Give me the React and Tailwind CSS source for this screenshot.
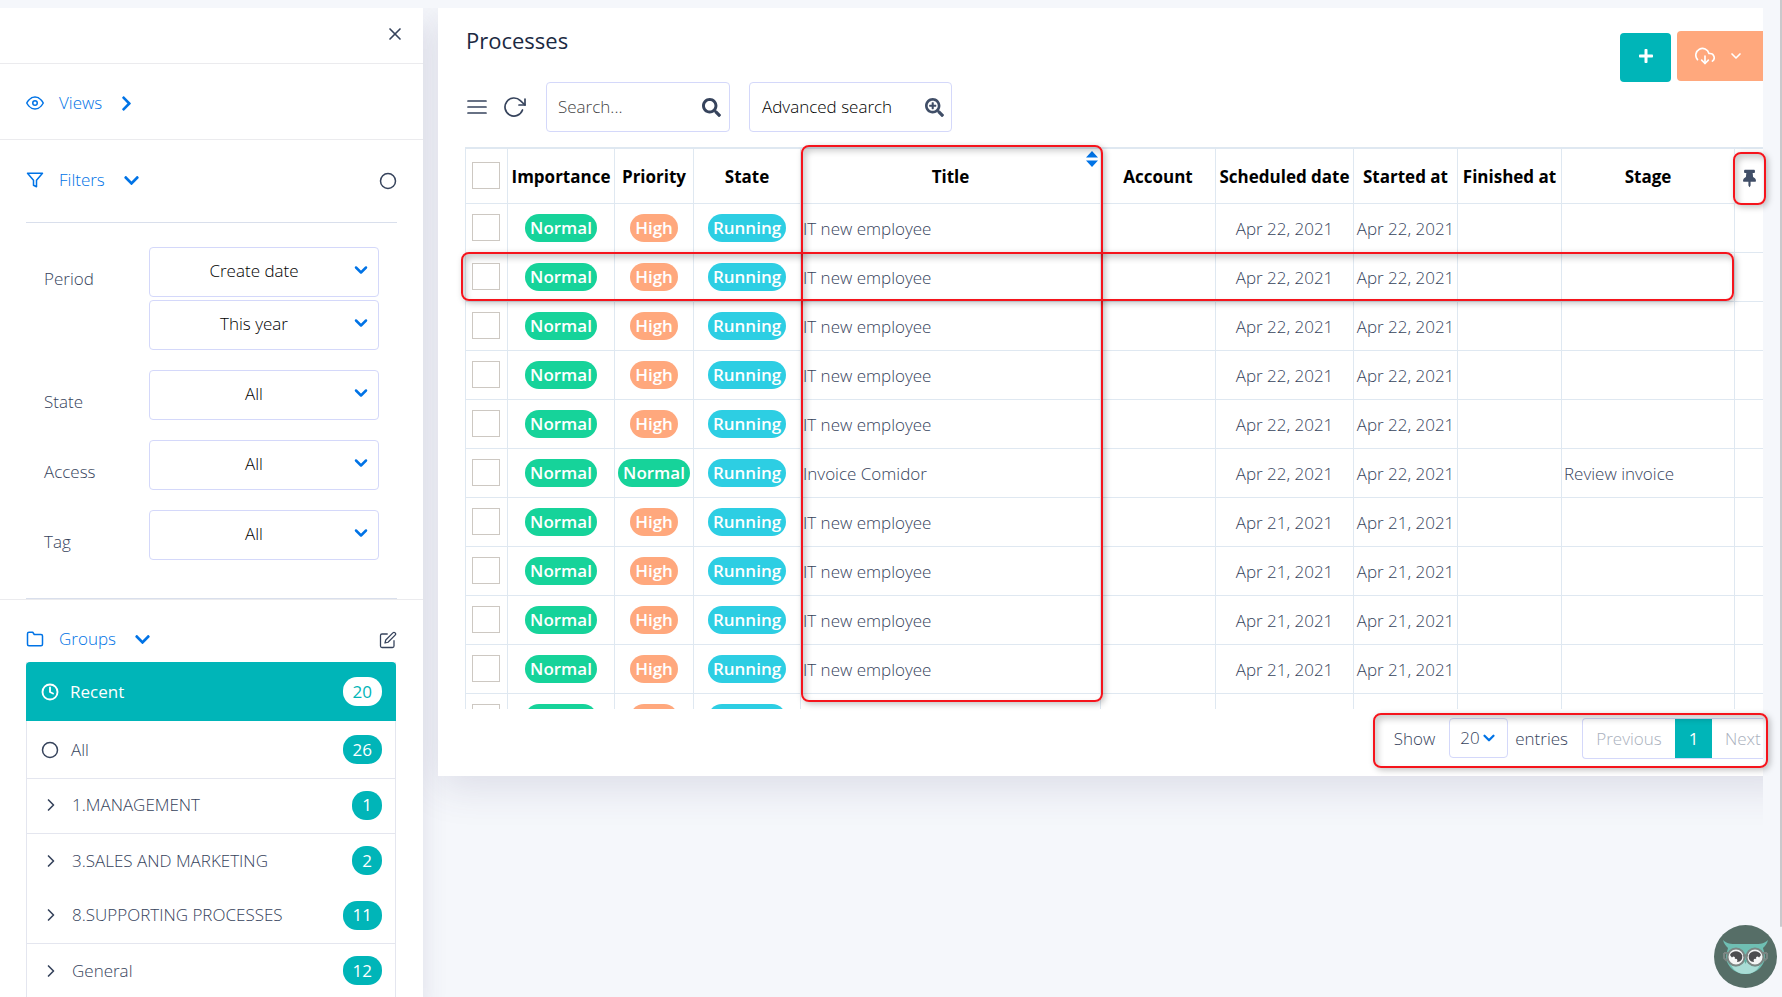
import React, { useState } from 'react';
import {
  FiChevronDown,
  FiChevronRight,
  FiCircle,
  FiClock,
  FiDownloadCloud,
  FiEdit,
  FiEye,
  FiFilter,
  FiFolder,
  FiMenu,
  FiRotateCw,
  FiX
} from 'react-icons/fi';
import { FaChevronDown, FaChevronRight, FaPlus, FaSearch, FaSearchPlus, FaThumbtack } from 'react-icons/fa';

const FILTERS = [
  { label: 'Period', options: ['Create date', 'This year'] },
  { label: 'State', options: ['All'] },
  { label: 'Access', options: ['All'] },
  { label: 'Tag', options: ['All'] }
];

const TREE = [
  { name: '1.MANAGEMENT', count: 1, line: true },
  { name: '3.SALES AND MARKETING', count: 2, line: false },
  { name: '8.SUPPORTING PROCESSES', count: 11, line: true },
  { name: 'General', count: 12, line: false }
];

const ROWS = [
  { title: 'IT new employee', priority: 'High', date: 'Apr 22, 2021' },
  { title: 'IT new employee', priority: 'High', date: 'Apr 22, 2021' },
  { title: 'IT new employee', priority: 'High', date: 'Apr 22, 2021' },
  { title: 'IT new employee', priority: 'High', date: 'Apr 22, 2021' },
  { title: 'IT new employee', priority: 'High', date: 'Apr 22, 2021' },
  { title: 'Invoice Comidor', priority: 'Normal', date: 'Apr 22, 2021', stage: 'Review invoice' },
  { title: 'IT new employee', priority: 'High', date: 'Apr 21, 2021' },
  { title: 'IT new employee', priority: 'High', date: 'Apr 21, 2021' },
  { title: 'IT new employee', priority: 'High', date: 'Apr 21, 2021' },
  { title: 'IT new employee', priority: 'High', date: 'Apr 21, 2021' },
  { title: 'IT new employee', priority: 'High', date: 'Apr 21, 2021' }
];

const PILL_COLORS = {
  Normal: 'bg-[#16d39a]',
  High: 'bg-[#ffa87d]',
  Running: 'bg-[#2dcee3]'
};

function Pill({ text }) {
  return (
    <span className={`inline-flex h-7 items-center rounded-full px-[5px] align-middle font-semibold text-white ${PILL_COLORS[text]}`}>
      {text}
    </span>
  );
}

function Count({ value, active }) {
  return (
    <span className={`flex h-[29px] min-w-[30px] items-center justify-center rounded-[14px] px-[10px] font-normal ${active ? 'bg-white text-[#00b5b8]' : 'bg-[#00b5b8] text-white'}`}>
      {value}
    </span>
  );
}

function Checkbox({ label }) {
  return (
    <input
      type="checkbox"
      aria-label={label}
      className="block h-[27px] w-7 appearance-none border border-[#cdc8c2] bg-white checked:bg-[#00b5b8]"
    />
  );
}

function FilterSelect({ id, value, label }) {
  return (
    <div className="relative">
      <select
        id={id}
        aria-label={label}
        className="block h-[50px] w-full appearance-none rounded border border-[#d4d8fa] bg-white pr-5 pb-[2px] text-center font-light text-black"
      >
        <option>{value}</option>
      </select>
      <FiChevronDown className="pointer-events-none absolute top-[13px] right-2 h-5 w-5 text-[#0073e6]" strokeWidth={3} />
    </div>
  );
}

function SectionHeader({ icon: Icon, title, open, children }) {
  const Arrow = open ? FaChevronDown : FaChevronRight;
  return (
    <div className="flex items-center justify-between">
      <button type="button" className="flex items-center text-[#0073e6]">
        <Icon className="mr-[15px] h-[18px] w-[18px]" />
        <span>{title}</span>
        <Arrow className={open ? 'ml-[18px] h-[17px] w-[17px]' : 'ml-4 h-[17px] w-[17px]'} />
      </button>
      {children}
    </div>
  );
}

function Sidebar() {
  return (
    <aside className="w-[423px] shrink-0 bg-white shadow-[0_16px_24px_rgba(62,57,107,0.12)]">
      <div className="flex h-14 items-center justify-end border-b border-[#ebebee] pr-[18px] pb-1">
        <button type="button" aria-label="Close">
          <FiX className="h-5 w-5" />
        </button>
      </div>
      <div className="h-[76px] border-b border-[#ebebee] px-[26px] pt-[27px]">
        <SectionHeader icon={FiEye} title="Views" />
      </div>
      <div className="h-[460px] border-b border-[#ebebee] px-[26px] pt-7">
        <SectionHeader icon={FiFilter} title="Filters" open>
          <button type="button" aria-label="Clear filters" className="pt-[2px]">
            <FiCircle className="h-[18px] w-[18px]" />
          </button>
        </SectionHeader>
        <div className="mt-[30px] flex h-[377px] flex-col gap-5 border-t border-b border-[#d9dfec] px-[18px] pt-6">
          {FILTERS.map((f) => (
            <div key={f.label} className="flex">
              <label htmlFor={`filter-${f.label}`} className="w-[105px] shrink-0 pt-5">{f.label}</label>
              <div className="flex flex-1 flex-col gap-[3px]">
                {f.options.map((value, i) => (
                  <FilterSelect key={value} id={i === 0 ? `filter-${f.label}` : undefined} value={value} label={i > 0 ? `${f.label} range` : undefined} />
                ))}
              </div>
            </div>
          ))}
        </div>
      </div>
      <div className="px-[26px] pt-[27px]">
        <SectionHeader icon={FiFolder} title="Groups" open>
          <button type="button" aria-label="Edit groups" className="pt-[2px]">
            <FiEdit className="h-[18px] w-[18px]" strokeWidth={1.7} />
          </button>
        </SectionHeader>
        <ul className="mt-[11px] mr-px rounded-b border-x border-b border-[#e4e6ef]">
          <li className="-mx-px flex h-[59px] items-center rounded-t bg-[#00b5b8] pr-[14px] pl-[15px] font-normal text-white">
            <FiClock className="mr-[11px] h-[18px] w-[18px]" strokeWidth={2.5} />
            <a href="#recent" className="flex-1">Recent</a>
            <Count value={20} active />
          </li>
          <li className="flex h-[58px] items-center border-b border-[#e4e6ef] pr-[13px] pl-[14px]">
            <FiCircle className="mr-3 h-[18px] w-[18px]" />
            <a href="#all" className="flex-1">All</a>
            <Count value={26} />
          </li>
          {TREE.map((g) => (
            <li key={g.name} className={`flex h-[55px] items-center pr-[13px] pb-[2px] pl-[14px] ${g.line ? 'border-b border-[#e4e6ef]' : ''}`}>
              <FiChevronRight className="mr-[11px] h-5 w-5" />
              <a href={`#${g.name}`} className="flex-1">{g.name}</a>
              <Count value={g.count} />
            </li>
          ))}
        </ul>
      </div>
    </aside>
  );
}

function SortArrows() {
  return (
    <svg viewBox="0 0 12 16" className="h-4 w-3 fill-[#0073e6]" aria-hidden="true">
      <path d="M6 0L12 6.5H0z M6 16L0 9.500H12z" />
    </svg>
  );
}

function ProcessTable() {
  return (
    <table className="w-[1340px] table-fixed border-collapse text-center [&_td]:border [&_td]:border-[#dfe8f1] [&_th]:border [&_th]:border-[#dfe8f1]">
      <colgroup>
        <col className="w-[42px]" />
        <col className="w-[107px]" />
        <col className="w-[79px]" />
        <col className="w-[107px]" />
        <col className="w-[300px]" />
        <col className="w-[115px]" />
        <col className="w-[138px]" />
        <col className="w-[104px]" />
        <col className="w-[104px]" />
        <col className="w-[173px]" />
        <col />
      </colgroup>
      <thead>
        <tr className="h-[55px] font-semibold whitespace-nowrap text-black">
          <th className="border-t-2! pl-[6px]"><Checkbox label="Select all" /></th>
          <th className="border-t-2! pt-[2px]">Importance</th>
          <th className="border-t-2! pt-[2px]">Priority</th>
          <th className="border-t-2! pt-[2px]">State</th>
          <th className="relative border-t-2! pt-[2px]">
            Title
            <span className="absolute top-[2px] right-[2px]"><SortArrows /></span>
          </th>
          <th className="border-t-2! pt-[2px]">Account</th>
          <th className="border-t-2! pt-[2px]">Scheduled date</th>
          <th className="border-t-2! pt-[2px]">Started at</th>
          <th className="border-t-2! pt-[2px]">Finished at</th>
          <th className="border-t-2! pt-[2px]">Stage</th>
          <th className="border-t-2! pt-[6px] pl-2">
            <FaThumbtack className="h-[19px] w-[13px] text-[#404e67]" aria-label="Pinned" />
          </th>
        </tr>
      </thead>
      <tbody>
        {ROWS.map((row, i) => (
          <tr key={i} className="h-[49px] whitespace-nowrap">
            <td className="pl-[6px]"><Checkbox label={`Select row ${i + 1}`} /></td>
            <td><Pill text="Normal" /></td>
            <td><Pill text={row.priority} /></td>
            <td><Pill text="Running" /></td>
            <td className="pt-[2px] pl-[2px] text-left">{row.title}</td>
            <td />
            <td className="pt-[2px]">{row.date}</td>
            <td className="pt-[2px]">{row.date}</td>
            <td />
            <td className="pt-[2px] pl-[2px] text-left">{row.stage}</td>
            <td />
          </tr>
        ))}
      </tbody>
    </table>
  );
}

function Highlight({ className }) {
  return (
    <div className={`pointer-events-none absolute rounded-lg border-2 border-[#f5141c] shadow-[2px_2px_6px_rgba(0,0,0,0.25),inset_3px_4px_6px_rgba(0,0,0,0.2)] ${className}`} />
  );
}

function Owl() {
  return (
    <button type="button" aria-label="Help" className="absolute right-[5px] bottom-[9px] h-[63px] w-[63px]">
      <svg viewBox="0 0 63 63" className="h-full w-full">
        <circle cx="31.5" cy="31.500" r="31.500" fill="#566e67" />
        <path d="M9 15c4 4 8 4 13 4h19c5 0 9 0 13-4-1 4-3 6-5 8l2 8c0 10-9 18-19.500 18S12 41 12 31l2-8c-2-2-4-4-5-8z" fill="#6fbfb3" />
        <path d="M17 40c5 3 10 1 14.500-5 4.500 6 9.500 8 14.500 5-3 6-8 9-14.500 9S20 46 17 40z" fill="#a9dcd5" />
        <g fill="#f4f4f4" stroke="#7b8683" strokeWidth="2">
          <circle cx="22" cy="32" r="8.500" />
          <circle cx="41" cy="32" r="8.500" />
        </g>
        <path d="M10 28h4M49 28h4M10 28v5l3 3M53 28v5l-3 3M29 31q2.500-1.500 5 0" fill="none" stroke="#7b8683" strokeWidth="2" />
        <path d="M16 30c2-5 10-5 12 0 1 4-1 7-5 7 1-2 0-4-2-3-1 0-3-1-5-4z" fill="#4d4d4f" />
        <path d="M47 30c-2-5-10-5-12 0-1 4 1 7 5 7-1-2 0-4 2-3 1 0 3-1 5-4z" fill="#4d4d4f" />
        <circle cx="19.500" cy="33" r="1.500" fill="#fff" />
        <circle cx="43.500" cy="33" r="1.500" fill="#fff" />
        <path d="M30 35h3l-1.500 4z" fill="#5fae9f" />
      </svg>
    </button>
  );
}

export default function App() {
  const [query, setQuery] = useState('');

  return (
    <div className="relative h-screen bg-[#f5f7fb] pt-2 font-['Open_Sans','Noto_Sans',sans-serif] text-[17px] leading-6 font-light text-[#36435c]">
      <div className="flex h-full overflow-hidden">
        <Sidebar />

        <div className="relative min-w-0 flex-1 pr-[19px]">
          <main className="h-full overflow-hidden pl-[15px]">
            <section className="-mr-10 h-[768px] overflow-hidden bg-white pr-10 pl-7 shadow-[0_10px_40px_rgba(62,57,107,0.14)]">
              <div className="flex h-[74px] items-start justify-between">
                <h1 className="pt-5 text-[22px] font-normal text-[#1b2942]">Processes</h1>
                <div className="flex items-start gap-[6px] pt-[23px]">
                  <button type="button" aria-label="Add" className="mt-[2px] flex h-[49px] w-[51px] items-center justify-center rounded bg-[#00b5b8] pb-[3px] text-white">
                    <FaPlus className="h-4 w-4" />
                  </button>
                  <button type="button" aria-label="Export" className="flex h-[50px] w-[86px] items-center gap-[13px] rounded-l bg-[#ffa87d] pl-[18px] text-white">
                    <FiDownloadCloud className="h-5 w-5" />
                    <FiChevronDown className="h-4 w-4" strokeWidth={2.5} />
                  </button>
                </div>
              </div>

              <div className="-ml-px flex h-[65px] items-start">
                <div className="flex h-[50px] items-center gap-[13px] pr-5">
                  <button type="button" aria-label="Menu"><FiMenu className="h-6 w-6" strokeWidth={1.7} /></button>
                  <button type="button" aria-label="Refresh"><FiRotateCw className="h-6 w-6" strokeWidth={1.7} /></button>
                </div>
                <div className="mr-[19px] flex h-[50px] w-[184px] items-center rounded border border-[#d4d8fa] pr-2 pl-[11px]">
                  <input
                    type="text"
                    aria-label="Search"
                    placeholder="Search..."
                    value={query}
                    onChange={(e) => setQuery(e.target.value)}
                    className="min-w-0 flex-1 font-light outline-none placeholder:text-[#444]"
                  />
                  <button type="button" aria-label="Run search"><FaSearch className="h-[19px] w-[19px]" /></button>
                </div>
                <button type="button" className="flex h-[50px] w-[203px] items-center justify-between rounded border border-[#d4d8fa] pr-[7px] pl-3 text-black">
                  Advanced search
                  <FaSearchPlus className="h-[19px] w-[19px] text-[#404e67]" />
                </button>
              </div>

              <div className="-ml-px h-[562px] overflow-hidden">
                <ProcessTable />
              </div>

              <div className="flex items-start justify-end pt-[9px]">
                <label htmlFor="page-size" className="pt-[9px] pr-[14px]">Show</label>
                <div className="relative">
                  <select id="page-size" className="block h-10 w-[59px] appearance-none rounded border border-[#d4d8fa] bg-white pl-[10px] font-light">
                    <option>20</option>
                  </select>
                  <FiChevronDown className="pointer-events-none absolute top-[11px] right-[10px] h-[18px] w-[18px] text-[#0073e6]" strokeWidth={3} />
                </div>
                <span className="pt-[9px] pr-[14px] pl-[7px]">entries</span>
                <nav className="flex h-[41px] w-[181px] items-stretch rounded-l border border-r-0 border-[#d4d8fa] text-[#a9b0bd]">
                  <button type="button" disabled className="w-[92px]">Previous</button>
                  <button type="button" className="w-[37px] bg-[#00b5b8] font-normal text-white">1</button>
                  <button type="button" disabled className="flex-1 pl-[13px] text-left">Next</button>
                </nav>
              </div>
            </section>
          </main>

          {/* callouts over the table */}
          <Highlight className="top-[137px] left-[378px] h-[557px] w-[302px]" />
          <Highlight className="top-[244px] left-[38px] h-[49px] w-[1273px]" />
          <Highlight className="top-[144px] left-[1310px] h-[53px] w-[33px]" />
          <Highlight className="top-[705px] right-[14px] h-[55px] w-[395px]" />
        </div>
      </div>

      <div className="absolute top-0 right-0 h-[927px] w-[2px] rounded-b bg-[#c9c9cc]" />
      <Owl />
    </div>
  );
}
